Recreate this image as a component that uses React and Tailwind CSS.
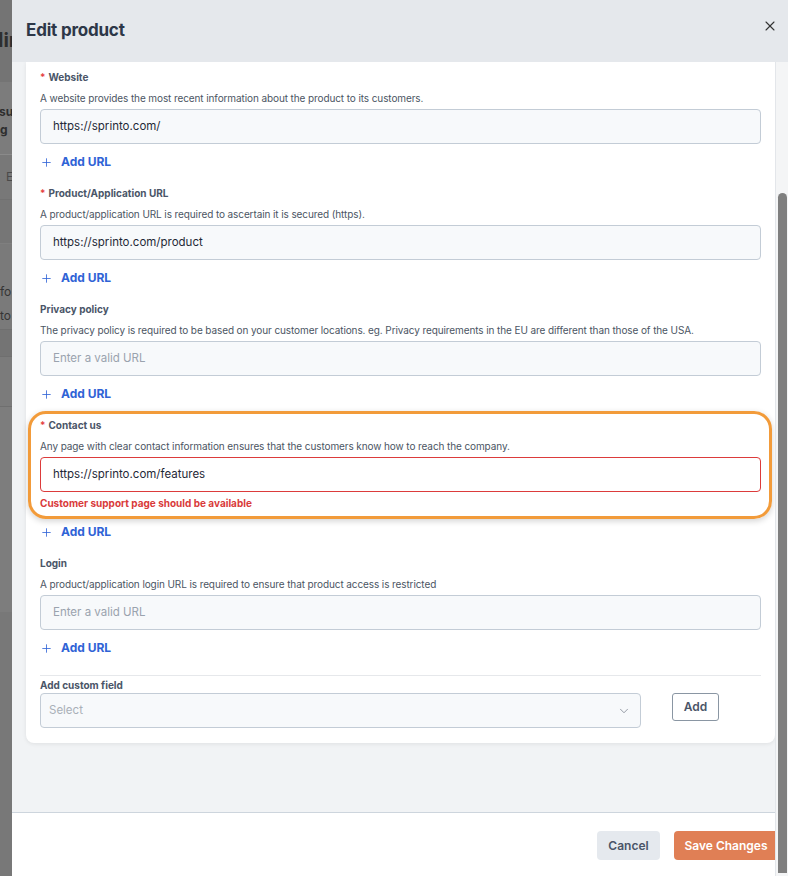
import { Plus, X, ChevronDown } from "lucide-react";

const fields = [
    {
        label: "Website",
        required: true,
        desc: "A website provides the most recent information about the product to its customers.",
        value: "https://sprinto.com/",
    },
    {
        label: "Product/Application URL",
        required: true,
        desc: "A product/application URL is required to ascertain it is secured (https).",
        value: "https://sprinto.com/product",
    },
    {
        label: "Privacy policy",
        required: false,
        desc: "The privacy policy is required to be based on your customer locations. eg. Privacy requirements in the EU are different than those of the USA.",
        value: "",
    },
    {
        label: "Contact us",
        required: true,
        desc: "Any page with clear contact information ensures that the customers know how to reach the company.",
        value: "https://sprinto.com/features",
        error: "Customer support page should be available",
        highlight: true,
    },
    {
        label: "Login",
        required: false,
        desc: "A product/application login URL is required to ensure that product access is restricted",
        value: "",
    },
];

const Backdrop = () => {
    return (
        <div className="flex w-[12px] shrink-0 flex-col overflow-hidden bg-[#787878] text-[#2e2e2e]">
            <div className="h-[82px] shrink-0 bg-[#747474] pt-[26px] text-[20px] font-bold leading-[28px] whitespace-nowrap">
                <span className="-ml-[2px] block">lir</span>
            </div>
            <div className="h-[73px] shrink-0 border-b border-[#8a8a8a] bg-[#7c7c7c] pt-[20px] text-[12px] font-bold leading-[20px] whitespace-nowrap">
                <span className="-ml-[1px] block">su</span>
                <span className="block leading-[16px]">g</span>
            </div>
            <div className="h-[45px] shrink-0 border-b border-[#717171] pt-[14px] pl-[6px] text-[12px] leading-[16px] text-[#4a4a4a]">E</div>
            <div className="h-[44px] shrink-0 border-b border-[#7f7f7f] bg-[#767676]" />
            <div className="h-[85px] shrink-0 bg-[#7a7a7a] pt-[36px] text-[12px] leading-[24px] whitespace-nowrap text-[#353535]">
                <span className="block">fo</span>
                <span className="block">to</span>
            </div>
            <div className="h-[28px] shrink-0 border-y border-[#6f6f6f] bg-[#747474]" />
            <div className="h-[50px] shrink-0 border-b border-[#6f6f6f] bg-[#7b7b7b]" />
            <div className="h-[205px] shrink-0 bg-[#7d7d7d]" />
            <div className="flex-1 bg-[#787878]" />
        </div>
    );
};

const Field = ({ field }) => {
    return (
        <div className="relative flex flex-col">
            {field.highlight && (
                <div className="pointer-events-none absolute -top-[6px] -bottom-[9px] -left-[12px] -right-[11px] rounded-[18px] border-[3px] border-[#f29b3a] shadow-[0_2px_6px_rgba(0,0,0,0.18)]" />
            )}
            <div className="h-[16px] text-[10px] font-bold leading-[16px] text-[#4a5568]">
                {field.required && <span className="mr-[3px] font-semibold text-[#e53e3e]">*</span>}
                {field.label}
            </div>
            <p className="mt-[5px] h-[16px] text-[10px] leading-[16px] tracking-[-0.1px] text-[#4b5563] whitespace-nowrap">
                {field.desc}
            </p>
            <div
                className={
                    field.error
                        ? "mt-[3px] flex h-[35px] items-center rounded-[4px] border border-[#dc3b3b] bg-white px-[12px] text-[11.5px]"
                        : "mt-[3px] flex h-[35px] items-center rounded-[4px] border border-[#c3ccd6] bg-[#f7f9fb] px-[12px] text-[11.5px]"
                }
            >
                {field.value ? (
                    <span className="text-[#1f2937]">{field.value}</span>
                ) : (
                    <span className="text-[#9aa3ae]">Enter a valid URL</span>
                )}
            </div>
            {field.error && (
                <p className="mt-[4px] h-[14px] text-[10px] font-bold leading-[14px] text-[#d93a3a]">{field.error}</p>
            )}
        </div>
    );
};

const AddUrl = () => {
    return (
        <button className="flex h-[18px] items-center gap-[8px] self-start text-[12px] font-bold text-[#2f63d6]">
            <Plus size={13} strokeWidth={1.5} />
            <span>Add URL</span>
        </button>
    );
};

export default function App() {
    return (
        <div className="flex h-[876px] w-[788px] overflow-hidden font-['Inter',sans-serif]">
            <Backdrop />
            <div className="flex min-w-0 flex-1 flex-col bg-white">
                {/* Header */}
                <div className="flex h-[62px] shrink-0 items-start justify-between bg-[#e5e8ec] pl-[14px] pr-[10px]">
                    <h1 className="mt-[18px] text-[17px] font-bold leading-[24px] tracking-[-0.2px] text-[#2d3748]">Edit product</h1>
                    <button className="mt-[18px] text-[#333]">
                        <X size={16} strokeWidth={1.6} />
                    </button>
                </div>
                <div className="flex min-h-0 flex-1">
                    <div className="flex min-w-0 flex-1 flex-col">
                        {/* Body */}
                        <div className="flex-1 overflow-hidden bg-[#f1f3f5] pl-[14px]">
                            <div className="flex flex-col rounded-b-[8px] bg-white px-[14px] pt-[7px] pb-[15px] shadow-[0_1px_4px_rgba(0,0,0,0.08)]">
                                {fields.map((f) => (
                                    <div key={f.label} className="mb-[14px] flex flex-col">
                                        <Field field={f} />
                                        <div className={f.error ? "mt-[13px]" : "mt-[9px]"}>
                                            <AddUrl />
                                        </div>
                                    </div>
                                ))}
                                <div className="mt-[4px] border-t border-[#e6e8eb]" />
                                <div className="mt-[1px] h-[16px] text-[10px] font-bold leading-[16px] text-[#4a5568]">Add custom field</div>
                                <div className="flex items-start gap-[31px]">
                                    <div className="flex h-[35px] w-[601px] items-center justify-between rounded-[4px] border border-[#c3ccd6] bg-[#f7f9fb] pl-[8px] pr-[9px] text-[11.5px] text-[#a9b0b8]">
                                        <span>Select</span>
                                        <ChevronDown size={14} strokeWidth={1.2} className="text-[#6b7280]" />
                                    </div>
                                    <button className="h-[28px] w-[47px] rounded-[3px] border border-[#8a96a3] bg-white text-[12px] font-semibold text-[#4a5568]">
                                        Add
                                    </button>
                                </div>
                            </div>
                        </div>
                        {/* Footer */}
                        <div className="flex h-[64px] shrink-0 items-start justify-end gap-[14px] overflow-hidden border-t border-[#cdd5dd] bg-white pt-[18px]">
                            <button className="h-[29px] w-[63px] rounded-[4px] bg-[#e5e9ee] text-[12px] font-semibold text-[#4a5568]">Cancel</button>
                            <button className="-mr-[3px] h-[29px] w-[104px] shrink-0 rounded-[4px] bg-[#e07f55] text-[12px] font-semibold text-white">Save Changes</button>
                        </div>
                    </div>
                    {/* Scrollbar */}
                    <div className="flex w-[13px] shrink-0 flex-col border-l border-[#e3e6ea] bg-[#f4f5f6] pl-[2px] pr-[1px]">
                        <div className="mt-[131px] mb-[3px] flex-1 rounded-t-full rounded-b-[6px] bg-[#7f7f7f]" />
                    </div>
                </div>
            </div>
        </div>
    );
}
